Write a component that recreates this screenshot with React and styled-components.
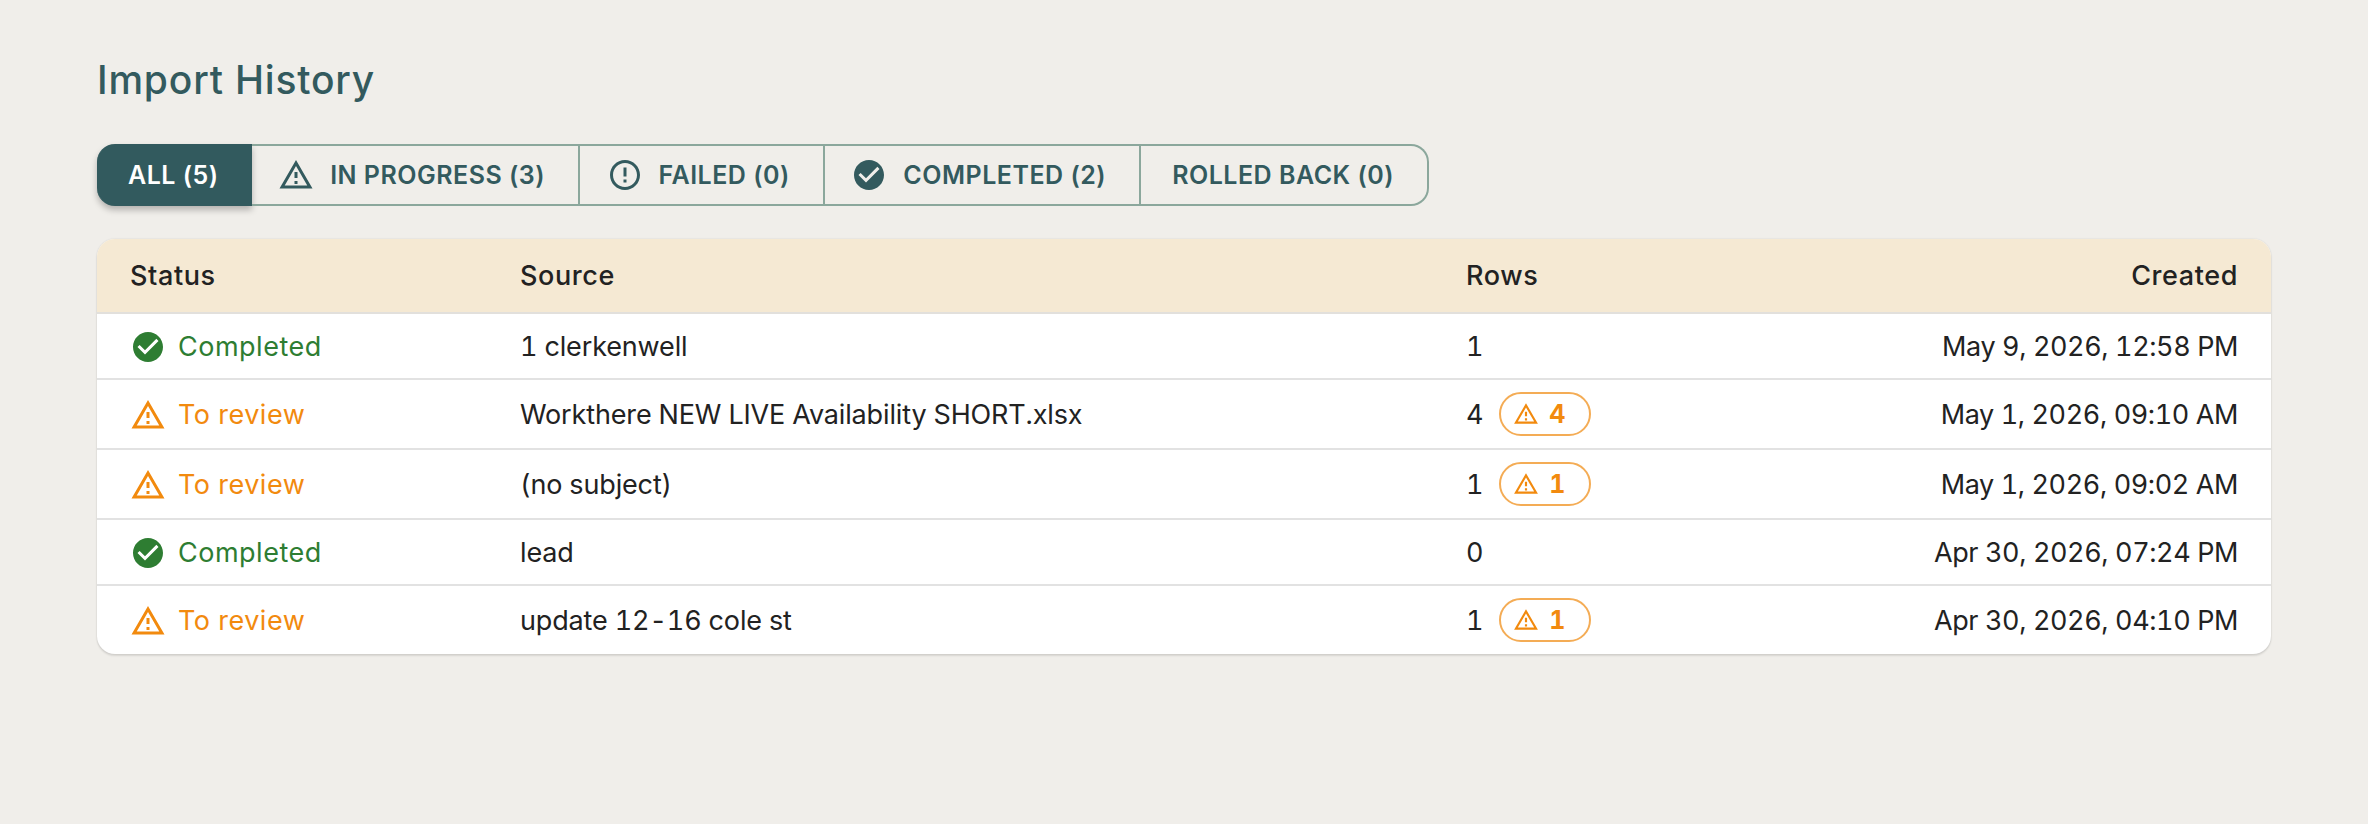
import React from "react";
import styled, { createGlobalStyle } from "styled-components";

const GlobalStyle = createGlobalStyle`
  body {
    margin: 0;
    background-color: #f0eeea;
    font-family: "Inter", "Liberation Sans", sans-serif;
  }
`;

const Page = styled.div`
  min-height: 824px;
  box-sizing: border-box;
  padding: 56px 97px 0;
`;

const Title = styled.h1`
  margin: 0 0 40px;
  font-size: 39px;
  line-height: 48px;
  font-weight: 500;
  letter-spacing: 0.8px;
  color: #335a5e;
`;

const TabGroup = styled.div`
  display: inline-flex;
  height: 62px;
  box-sizing: border-box;
  margin-bottom: 33px;
  vertical-align: top;
`;

const Tab = styled.button`
  display: flex;
  align-items: center;
  gap: 16px;
  height: 100%;
  box-sizing: border-box;
  padding: 0 ${(props) => (props.$active ? "31px" : "33px")} 0 31px;
  margin: 0;
  font-family: inherit;
  font-size: 25px;
  font-weight: 600;
  letter-spacing: 0.5px;
  text-transform: uppercase;
  white-space: nowrap;
  cursor: pointer;
  color: ${(props) => (props.$active ? "#ffffff" : "#335a5e")};
  background-color: ${(props) => (props.$active ? "#325a5e" : "transparent")};
  border: 2px solid ${(props) => (props.$active ? "#325a5e" : "#8ba79c")};
  border-left: none;
  box-shadow: ${(props) =>
    props.$active ? "0 4px 6px rgba(0, 0, 0, 0.25)" : "none"};
  border-radius: ${(props) =>
    props.$active ? "18px 0 0 18px" : props.$last ? "0 18px 18px 0" : "0"};
  svg {
    margin-left: -4.5px;
  }
`;

const Card = styled.div`
  background-color: #ffffff;
  border-radius: 18px;
  overflow: hidden;
  box-shadow: 0 2px 2px rgba(0, 0, 0, 0.1), 0 0 2px rgba(0, 0, 0, 0.12);
`;

const Table = styled.table`
  width: 100%;
  table-layout: fixed;
  border-collapse: separate;
  border-spacing: 0;
  color: #222222;
  font-variant-numeric: tabular-nums;
`;

const Th = styled.th`
  box-sizing: border-box;
  height: 75px;
  padding: 0 33px 0 34px;
  font-size: 27px;
  font-weight: 500;
  letter-spacing: 0.6px;
  text-align: ${(props) => props.$align || "left"};
  background-color: #f5e9d3;
  border-bottom: 2px solid #e2e0dc;
  &:first-child {
    padding-left: 33px;
  }
`;

const Td = styled.td`
  box-sizing: border-box;
  height: 66px;
  padding: 13px 33px 11px 34px;
  font-size: 27px;
  line-height: 36px;
  font-weight: 400;
  letter-spacing: -0.15px;
  text-align: left;
  border-bottom: 2px solid #e2e2e2;
  white-space: nowrap;
  &:first-child {
    padding-left: 33px;
  }
  tr:last-child & {
    border-bottom: none;
  }
`;

const DateCell = styled(Td)`
  text-align: right;
  letter-spacing: -0.4px;
`;

const Status = styled.div`
  display: flex;
  align-items: center;
  gap: 12px;
  letter-spacing: 0.5px;
  color: ${(props) => props.$color};
`;

const RowsCell = styled.div`
  display: flex;
  align-items: center;
  gap: 16px;
`;

const Badge = styled.span`
  display: inline-flex;
  align-items: center;
  gap: 10px;
  width: 92px;
  height: 44px;
  box-sizing: border-box;
  padding-left: 12px;
  border: 2px solid #f4ac55;
  border-radius: 22px;
  font-size: 25px;
  font-weight: 700;
  color: #f28a0e;
  transform: translateY(-1px);
`;

const warningPath =
  "M12 5.99 19.53 19H4.47zM12 2 1 21h22zm1 14h-2v2h2zm0-6h-2v4h2z";
const errorPath =
  "M11 15h2v2h-2zm0-8h2v6h-2zm.99-5C6.47 2 2 6.48 2 12s4.47 10 9.99 10C17.52 22 22 17.52 22 12S17.52 2 11.99 2M12 20c-4.42 0-8-3.58-8-8s3.58-8 8-8 8 3.58 8 8-3.58 8-8 8";
const checkPath =
  "M12 2C6.48 2 2 6.48 2 12s4.48 10 10 10 10-4.48 10-10S17.52 2 12 2zm-2 15-5-5 1.41-1.41L10 14.17l7.59-7.59L19 8l-9 9z";

function Icon({ d, size = 36 }) {
  return (
    <svg width={size} height={size} viewBox="0 0 24 24" fill="currentColor" style={{ flexShrink: 0 }}>
      <path d={d} />
    </svg>
  );
}

const tabs = [
  { label: "All (5)", active: true },
  { label: "In Progress (3)", icon: warningPath },
  { label: "Failed (0)", icon: errorPath },
  { label: "Completed (2)", icon: checkPath },
  { label: "Rolled Back (0)", last: true },
];

const rows = [
  { status: "done", source: "1 clerkenwell", count: 1, created: "May 9, 2026, 12:58 PM" },
  { status: "review", source: "Workthere NEW LIVE Availability SHORT.xlsx", count: 4, flagged: 4, created: "May 1, 2026, 09:10 AM" },
  { status: "review", source: "(no subject)", count: 1, flagged: 1, created: "May 1, 2026, 09:02 AM" },
  { status: "done", source: "lead", count: 0, created: "Apr 30, 2026, 07:24 PM" },
  { status: "review", source: "update 12-16 cole st", count: 1, flagged: 1, created: "Apr 30, 2026, 04:10 PM" },
];

function App() {
  return (
    <>
      <GlobalStyle />
      <Page>
        <Title>Import History</Title>
        <TabGroup>
          {tabs.map((tab) => (
            <Tab key={tab.label} $active={tab.active} $last={tab.last}>
              {tab.icon && <Icon d={tab.icon} />}
              {tab.label}
            </Tab>
          ))}
        </TabGroup>
        <Card>
          <Table>
            <colgroup>
              <col style={{ width: 389 }} />
              <col style={{ width: 946 }} />
              <col style={{ width: 400 }} />
              <col />
            </colgroup>
            <thead>
              <tr>
                <Th>Status</Th>
                <Th>Source</Th>
                <Th>Rows</Th>
                <Th $align="right">Created</Th>
              </tr>
            </thead>
            <tbody>
              {rows.map((row) => (
                <tr key={row.created}>
                  <Td>
                    {row.status === "done" ? (
                      <Status $color="#2e7d32">
                        <Icon d={checkPath} />
                        Completed
                      </Status>
                    ) : (
                      <Status $color="#f28a0e">
                        <Icon d={warningPath} />
                        To review
                      </Status>
                    )}
                  </Td>
                  <Td>{row.source}</Td>
                  <Td>
                    <RowsCell>
                      {row.count}
                      {row.flagged && (
                        <Badge>
                          <Icon d={warningPath} size={26} />
                          {row.flagged}
                        </Badge>
                      )}
                    </RowsCell>
                  </Td>
                  <DateCell>{row.created}</DateCell>
                </tr>
              ))}
            </tbody>
          </Table>
        </Card>
      </Page>
    </>
  );
}

export default App;
